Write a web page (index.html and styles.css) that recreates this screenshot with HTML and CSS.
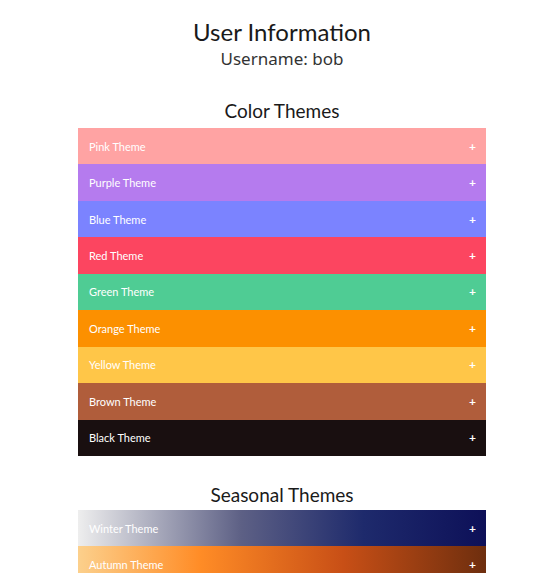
FILE: index.html
```html
<!DOCTYPE html>
<html>
<head>
    <meta charset="UTF-8">
    <title>Profile</title>
    <link rel="stylesheet" href="styles.css">
</head>
<body>
<div class="content">
    <h1>User Information</h1>
    <p class="username">Username: bob</p>

    <h2>Color Themes</h2>
    <div class="themes">
        <div class="theme pink"><span>Pink Theme</span><span class="plus">+</span></div>
        <div class="theme purple"><span>Purple Theme</span><span class="plus">+</span></div>
        <div class="theme blue"><span>Blue Theme</span><span class="plus">+</span></div>
        <div class="theme red"><span>Red Theme</span><span class="plus">+</span></div>
        <div class="theme green"><span>Green Theme</span><span class="plus">+</span></div>
        <div class="theme orange"><span>Orange Theme</span><span class="plus">+</span></div>
        <div class="theme yellow"><span>Yellow Theme</span><span class="plus">+</span></div>
        <div class="theme brown"><span>Brown Theme</span><span class="plus">+</span></div>
        <div class="theme black"><span>Black Theme</span><span class="plus">+</span></div>
    </div>

    <h2 class="seasonal">Seasonal Themes</h2>
    <div class="themes">
        <div class="theme winter"><span>Winter Theme</span><span class="plus">+</span></div>
        <div class="theme autumn"><span>Autumn Theme</span><span class="plus">+</span></div>
    </div>
</div>
</body>
</html>
```

FILE: styles.css
```css
body {
    font-family: Lato, "Open Sans", sans-serif;
    background-color: #fff;
    color: #1a1a1a;
    margin: 0;
    padding: 0 0 0 78px;
}
.content {
    width: 408px;
}
h1 {
    font-size: 24px;
    font-weight: 400;
    text-align: center;
    margin: 17px 0 0 0;
    line-height: 30px;
}
.username {
    font-family: "Noto Sans", sans-serif;
    font-size: 17px;
    text-align: center;
    margin: 0;
    line-height: 24px;
    color: #333;
}
h2 {
    font-size: 19px;
    font-weight: 400;
    text-align: center;
    margin: 26px 0 3px 0;
    line-height: 28px;
}
h2.seasonal {
    margin-top: 25px;
    margin-bottom: 1px;
}
.theme {
    height: 36.45px;
    display: flex;
    align-items: center;
    justify-content: space-between;
    padding: 0 10px 0 11px;
    color: #fff;
    font-size: 11px;
}
.plus {
    font-size: 12px;
    font-weight: bold;
}
.pink { background-color: #ffa3a3; }
.purple { background-color: #b57bee; }
.blue { background-color: #7b83ff; }
.red { background-color: #fc4560; }
.green { background-color: #4fcc94; }
.orange { background-color: #fc9000; }
.yellow { background-color: #ffc648; }
.brown { background-color: #b05d3b; }
.black { background-color: #190f10; }
.winter {
    background: linear-gradient(to right, #eeeeee 0%, #5d6085 40%, #1e2a6c 70%, #0d1058 100%);
}
.autumn {
    background: linear-gradient(to right, #fcd08c 0%, #ff8c26 30%, #c84f16 65%, #6e2e0e 100%);
}
```
